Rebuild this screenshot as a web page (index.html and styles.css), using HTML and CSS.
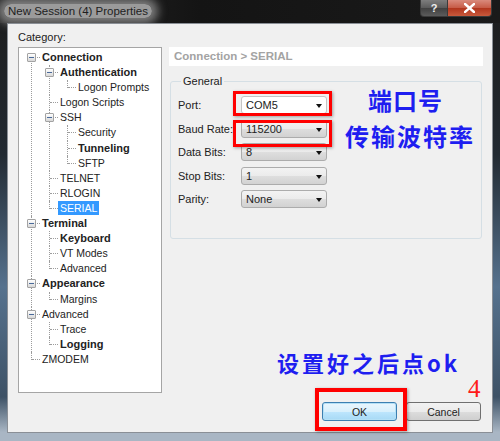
FILE: index.html
```html
<!DOCTYPE html>
<html lang="en">

<head>
    <meta charset="UTF-8">
    <title>New Session (4) Properties</title>
    <link rel="stylesheet" href="styles.css">
</head>

<body>
    <div class="window">
        <div class="titlebar">
            <span class="title">New Session (4) Properties</span>
            <div class="caption">
                <span class="cap-help">?</span>
                <span class="cap-close">
                    <svg width="11" height="10" viewBox="0 0 11 10"><path d="M1 1 L10 9 M10 1 L1 9" stroke="#fff" stroke-width="2.4" stroke-linecap="square"/></svg>
                </span>
            </div>
        </div>

        <div class="client">
            <div class="category-label">Category:</div>

            <div class="main">
                <div class="tree-box">
                    <ul class="tree">
                        <li>
                            <div class="row"><span class="exp"></span><span class="label b">Connection</span></div>
                            <ul>
                                <li>
                                    <div class="row"><span class="exp"></span><span class="label b">Authentication</span></div>
                                    <ul>
                                        <li><div class="row"><span class="label">Logon Prompts</span></div></li>
                                    </ul>
                                </li>
                                <li><div class="row"><span class="label">Logon Scripts</span></div></li>
                                <li>
                                    <div class="row"><span class="exp"></span><span class="label">SSH</span></div>
                                    <ul>
                                        <li><div class="row"><span class="label">Security</span></div></li>
                                        <li><div class="row"><span class="label b">Tunneling</span></div></li>
                                        <li><div class="row"><span class="label">SFTP</span></div></li>
                                    </ul>
                                </li>
                                <li><div class="row"><span class="label">TELNET</span></div></li>
                                <li><div class="row"><span class="label">RLOGIN</span></div></li>
                                <li><div class="row"><span class="label sel">SERIAL</span></div></li>
                            </ul>
                        </li>
                        <li>
                            <div class="row"><span class="exp"></span><span class="label b">Terminal</span></div>
                            <ul>
                                <li><div class="row"><span class="label b">Keyboard</span></div></li>
                                <li><div class="row"><span class="label">VT Modes</span></div></li>
                                <li><div class="row"><span class="label">Advanced</span></div></li>
                            </ul>
                        </li>
                        <li>
                            <div class="row"><span class="exp"></span><span class="label b">Appearance</span></div>
                            <ul>
                                <li><div class="row"><span class="label">Margins</span></div></li>
                            </ul>
                        </li>
                        <li>
                            <div class="row"><span class="exp"></span><span class="label">Advanced</span></div>
                            <ul>
                                <li><div class="row"><span class="label">Trace</span></div></li>
                                <li><div class="row"><span class="label b">Logging</span></div></li>
                            </ul>
                        </li>
                        <li><div class="row"><span class="label">ZMODEM</span></div></li>
                    </ul>
                </div>

                <div class="panel">
                    <div class="panel-title">Connection &gt; SERIAL</div>
                    <fieldset class="group">
                        <legend>General</legend>
                        <div class="field"><span>Port:</span><div class="combo white">COM5</div></div>
                        <div class="field"><span>Baud Rate:</span><div class="combo">115200</div></div>
                        <div class="field"><span>Data Bits:</span><div class="combo">8</div></div>
                        <div class="field"><span>Stop Bits:</span><div class="combo">1</div></div>
                        <div class="field"><span>Parity:</span><div class="combo">None</div></div>
                    </fieldset>
                </div>
            </div>

            <div class="buttons">
                <button class="btn default">OK</button>
                <button class="btn">Cancel</button>
            </div>

            <!-- annotations drawn on top of the dialog -->
            <div class="mark mark-port"></div>
            <div class="mark mark-baud"></div>
            <div class="mark mark-ok"></div>
            <div class="note note-port">端口号</div>
            <div class="note note-baud">传输波特率</div>
            <div class="note note-ok">设置好之后点ok</div>
            <div class="step">4</div>
        </div>
    </div>
</body>

</html>
```

FILE: styles.css
```css
* {
    margin: 0;
    padding: 0;
    box-sizing: border-box;
}

body {
    width: 500px;
    height: 441px;
    overflow: hidden;
    background: #1a1a1a;
    font-family: 'Liberation Sans', Arial, sans-serif;
    font-size: 11px;
    color: #222;
}

.window {
    width: 500px;
    height: 441px;
    display: flex;
    flex-direction: column;
    background: linear-gradient(to bottom, #1c1c1c 0%, #222a32 35%, #56728e 65%, #3e5266 90%, #a9b6c4 98%);
}

/* title bar */

.titlebar {
    height: 23px;
    display: flex;
    justify-content: space-between;
    align-items: flex-start;
    background: linear-gradient(to right, #2a2a2a, #141414 40%, #1a1a1a);
}

.title {
    margin: 4px 0 0 4px;
    padding: 0 4px;
    height: 14px;
    line-height: 14px;
    font-size: 11.5px;
    color: #1e1e1e;
    background: rgba(168, 168, 168, 0.9);
    border-radius: 9px;
    box-shadow: 0 0 10px 6px rgba(150, 150, 150, 0.8);
}

.caption {
    display: flex;
    margin-right: 8px;
}

.cap-help,
.cap-close {
    height: 17px;
    display: flex;
    justify-content: center;
    align-items: center;
    border: 1px solid #3a3a3a;
    border-top: none;
}

.cap-help {
    width: 28px;
    border-radius: 0 0 0 4px;
    color: #eee;
    font-weight: bold;
    font-size: 11px;
    background: linear-gradient(#7d7d7d, #5a5a5a 50%, #404040 50%, #5c5c5c);
}

.cap-close {
    width: 44px;
    border-radius: 0 0 4px 0;
    border-left: none;
    background: linear-gradient(#d98a7c, #c65a45 50%, #b0341c 50%, #c85a3c);
}

/* client area */

.client {
    flex: 1;
    position: relative;
    margin: 0 7px 8px 7px;
    border: 1px solid #8a8f96;
    background: #f0f0f0;
    padding: 6px 9px 11px 10px;
    display: flex;
    flex-direction: column;
}

.category-label {
    height: 15px;
    line-height: 15px;
    margin-bottom: 2px;
}

.main {
    display: flex;
    gap: 7px;
    height: 346px;
}

/* tree */

.tree-box {
    width: 144px;
    height: 346px;
    background: #fff;
    border: 1px solid #a5a5a5;
    padding-top: 2px;
}

.tree,
.tree ul {
    list-style: none;
}

.tree ul {
    padding-left: 18px;
}

.tree li {
    position: relative;
}

.tree li::before {
    content: '';
    position: absolute;
    left: 12px;
    top: 0;
    bottom: 0;
    border-left: 1px dotted #9c9c9c;
}

.tree li:last-child::before {
    bottom: auto;
    height: 8px;
}

.tree > li:first-child::before {
    top: 8px;
}

.row {
    position: relative;
    height: 15.1px;
    line-height: 15px;
    padding-left: 23px;
    white-space: nowrap;
}

.row::before {
    content: '';
    position: absolute;
    left: 13px;
    top: 7px;
    width: 8px;
    border-top: 1px dotted #9c9c9c;
}

.exp {
    position: absolute;
    left: 8px;
    top: 3px;
    width: 9px;
    height: 9px;
    z-index: 1;
    border: 1px solid #a3a3a3;
    border-radius: 1px;
    background: linear-gradient(#ffffff, #d8d8d8);
}

.exp::after {
    content: '';
    position: absolute;
    left: 1px;
    top: 3px;
    width: 5px;
    height: 1px;
    background: #4a6a9a;
}

.label {
    font-size: 10.5px;
}

.label.b {
    font-weight: bold;
    font-size: 11px;
}

.label.sel {
    background: #3399ff;
    color: #fff;
    margin-left: -2px;
    padding: 1px 2px;
}

/* right panel */

.panel {
    flex: 1;
    display: flex;
    flex-direction: column;
}

.panel-title {
    height: 19px;
    line-height: 19px;
    padding-left: 5px;
    background: #fff;
    color: #a3a3a3;
    font-weight: bold;
    font-size: 11.5px;
}

.group {
    margin: 8px 1px 0 1px;
    height: 165px;
    border: 1px solid #d5dfe5;
    border-radius: 3px;
    padding: 8px 0 0 7px;
}

.group legend {
    margin-left: 3px;
    padding: 0 2px;
    line-height: 14px;
    font-size: 11px;
}

.field {
    display: grid;
    grid-template-columns: 63px 86px;
    align-items: center;
    height: 18px;
    margin-bottom: 5.5px;
}

.combo {
    position: relative;
    height: 18px;
    line-height: 16px;
    padding-left: 4px;
    border: 1px solid #acacac;
    border-radius: 3px;
    background: linear-gradient(#f3f3f3, #ebebeb 50%, #dedede 50%, #d2d2d2);
}

.combo.white {
    background: #fff;
    border-color: #c4c4c4;
}

.combo::after {
    content: '';
    position: absolute;
    right: 4px;
    top: 7px;
    border-left: 3.5px solid transparent;
    border-right: 3.5px solid transparent;
    border-top: 4px solid #111;
}

/* buttons */

.buttons {
    display: flex;
    justify-content: flex-end;
    gap: 9px;
    margin-top: 9px;
    padding-right: 2px;
}

.btn {
    width: 75px;
    height: 19px;
    font-family: 'Liberation Sans', Arial, sans-serif;
    font-size: 10.5px;
    color: #222;
    border: 1px solid #707070;
    border-radius: 3px;
    background: linear-gradient(#f2f2f2, #ebebeb 50%, #dddddd 50%, #cfcfcf);
}

.btn.default {
    border-color: #3c7fb1;
    box-shadow: inset 0 0 0 1px #b4e0f6;
    background: linear-gradient(#eaf6fd, #d9f0fc 50%, #bee6fd 50%, #a7d9f5);
}

/* annotations */

.mark {
    position: absolute;
    border: 3px solid #ff0000;
    box-shadow: 1px 1px 3px rgba(0, 0, 0, 0.35);
}

.mark-port {
    left: 225px;
    top: 67px;
    width: 99px;
    height: 25px;
}

.mark-baud {
    left: 225px;
    top: 96px;
    width: 99px;
    height: 27px;
}

.mark-ok {
    left: 307px;
    top: 364px;
    width: 92px;
    height: 43px;
    border-width: 4px;
}

.note {
    position: absolute;
    font-family: 'Noto Sans CJK SC', sans-serif;
    font-weight: bold;
    color: #1e1ef0;
    line-height: 1;
    white-space: nowrap;
}

.note-port {
    left: 360px;
    top: 64px;
    font-size: 24px;
    letter-spacing: 1px;
}

.note-baud {
    left: 337px;
    top: 100px;
    font-size: 24px;
    letter-spacing: 2px;
}

.note-ok {
    left: 269px;
    top: 327px;
    font-size: 22px;
    letter-spacing: 3px;
}

.step {
    position: absolute;
    left: 460px;
    top: 352px;
    font-family: 'Liberation Serif', serif;
    font-size: 25px;
    line-height: 1;
    color: #ff1a1a;
}
```
